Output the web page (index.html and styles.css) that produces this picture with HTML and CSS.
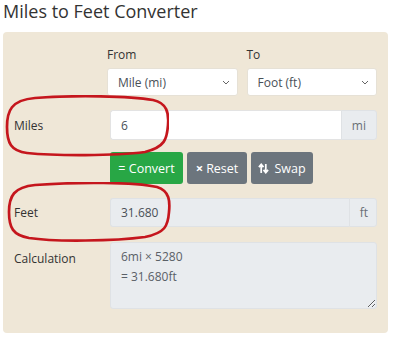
FILE: index.html
```html
<!DOCTYPE html>
<html lang="en">
<head>
  <meta charset="UTF-8" />
  <title>Miles to Feet Converter</title>
  <link rel="stylesheet" href="styles.css">
</head>
<body>
  <h1 class="title">Miles to Feet Converter</h1>

  <div class="card">
    <div class="row unit-row">
      <div class="unit-col">
        <label class="unit-label">From</label>
        <select class="unit-select"><option>Mile (mi)</option></select>
      </div>
      <div class="unit-col">
        <label class="unit-label">To</label>
        <select class="unit-select"><option>Foot (ft)</option></select>
      </div>
    </div>

    <div class="row field-row miles-row">
      <label class="field-label">Miles</label>
      <div class="input-group">
        <input class="field-input" type="text" value="6" />
        <span class="addon">mi</span>
      </div>
      <svg class="mark mark-miles" viewBox="0 0 164 62" width="164" height="62">
        <path d="M30 3 C70 0 125 1 148 5 C162 8 164 18 163 30 C162 44 160 52 140 57 C110 61 50 61 22 58 C6 56 2 48 2 32 C2 16 6 5 30 3 Z" />
      </svg>
    </div>

    <div class="row btn-row">
      <button type="button" class="btn btn-convert">= Convert</button>
      <button type="button" class="btn btn-gray btn-reset"><b>×</b> Reset</button>
      <button type="button" class="btn btn-gray btn-swap">
        <svg class="swap-icon" viewBox="0 0 12 12" width="11" height="11">
          <path d="M3.5 11 V2.5 M1 4.5 L3.5 1.5 L6 4.5 M8.5 1 V9.5 M6 7.5 L8.5 10.5 L11 7.5" />
        </svg>Swap
      </button>
    </div>

    <div class="row field-row feet-row">
      <label class="field-label">Feet</label>
      <div class="input-group">
        <input class="field-input readonly" type="text" value="31.680" readonly />
        <span class="addon addon-ft">ft</span>
      </div>
      <svg class="mark mark-feet" viewBox="0 0 164 60" width="164" height="60">
        <path d="M28 3 C70 0 128 0 150 5 C163 9 163 20 162 30 C161 44 158 51 138 55 C108 59 48 60 22 56 C6 53 2 46 2 30 C2 14 7 5 28 3 Z" />
      </svg>
    </div>

    <div class="row field-row calc-row">
      <label class="field-label">Calculation</label>
      <textarea class="calc-box" readonly>6mi × 5280
= 31.680ft</textarea>
    </div>
  </div>
</body>
</html>
```

FILE: styles.css
```css
body {
  margin: 0;
  padding: 0 5px 0 3px;
  font-family: "Open Sans", "Noto Sans", sans-serif;
  color: #333;
  background: #fff;
}
.title {
  margin: 0 0 10px;
  font-size: 18px;
  font-weight: 400;
  line-height: 22px;
  color: #333;
}
.card {
  background: #efe7d7;
  border-radius: 4px;
  padding: 15px 11px 24px;
}
.row {
  display: grid;
  grid-template-columns: 96px 1fr;
}
.unit-row {
  grid-template-columns: 1fr 1fr;
  column-gap: 9px;
  margin-left: 93px;
}
.unit-label {
  display: block;
  font-size: 12px;
  line-height: 16px;
  margin-bottom: 5px;
  color: #333;
}
.unit-select {
  -webkit-appearance: none;
  appearance: none;
  width: 100%;
  height: 28px;
  padding: 0 20px 0 10px;
  font-family: inherit;
  font-size: 12px;
  color: #495057;
  background: #fff url("data:image/svg+xml;utf8,<svg xmlns='http://www.w3.org/2000/svg' width='8' height='5' viewBox='0 0 8 5'><path d='M1 1 L4 4 L7 1' fill='none' stroke='%23666' stroke-width='1'/></svg>") no-repeat right 7px center;
  border: 1px solid #e6e1d6;
  border-radius: 3px;
}
.field-row {
  position: relative;
  align-items: center;
}
.field-label {
  font-size: 12px;
  color: #333;
}
.miles-row {
  margin-top: 14px;
}
.input-group {
  display: flex;
  height: 30px;
}
.field-input {
  flex: 1;
  min-width: 0;
  margin: 0;
  padding: 0 10px;
  font-family: inherit;
  font-size: 12px;
  color: #495057;
  background: #fff;
  border: 1px solid #e3e3e3;
  border-right: none;
  border-radius: 3px 0 0 3px;
}
.field-input.readonly {
  background: #e9ecef;
  border-color: #dfe2e5;
}
.addon {
  display: flex;
  align-items: center;
  padding: 0 10px;
  font-size: 12px;
  color: #6a6f75;
  background: #e9ecef;
  border: 1px solid #dfe2e5;
  border-radius: 0 3px 3px 0;
}
.addon-ft {
  padding: 0 8px 0 10px;
}
.btn-row {
  display: flex;
  gap: 4px;
  margin: 12px 0 0 96px;
}
.btn {
  height: 32px;
  padding: 0;
  font-family: inherit;
  font-size: 12.5px;
  color: #fff;
  border: none;
  border-radius: 3px;
  display: flex;
  align-items: center;
  justify-content: center;
  gap: 3px;
}
.btn-convert {
  background: #28a745;
  width: 73px;
}
.btn-gray {
  background: #6c757d;
}
.btn-reset {
  width: 60px;
}
.btn-swap {
  width: 62px;
}
.btn-gray b {
  font-size: 13px;
}
.swap-icon {
  fill: none;
  stroke: #fff;
  stroke-width: 1.9;
  margin-right: 2px;
}
.feet-row {
  margin-top: 14px;
}
.feet-row .input-group {
  height: 29px;
}
.calc-row {
  margin-top: 15px;
  align-items: start;
}
.calc-row .field-label {
  margin-top: 8px;
}
.calc-box {
  height: 67px;
  box-sizing: border-box;
  padding: 4px 10px;
  font-family: inherit;
  font-size: 12px;
  line-height: 20px;
  color: #5a6067;
  background: #e9ecef;
  border: 1px solid #dfe2e5;
  border-radius: 3px;
  resize: vertical;
}
.mark {
  position: absolute;
  left: -9px;
  top: -15px;
  fill: none;
  stroke: #c5161d;
  stroke-width: 2.7;
  pointer-events: none;
}
.mark-feet {
  left: -7px;
  top: -16px;
}
```
